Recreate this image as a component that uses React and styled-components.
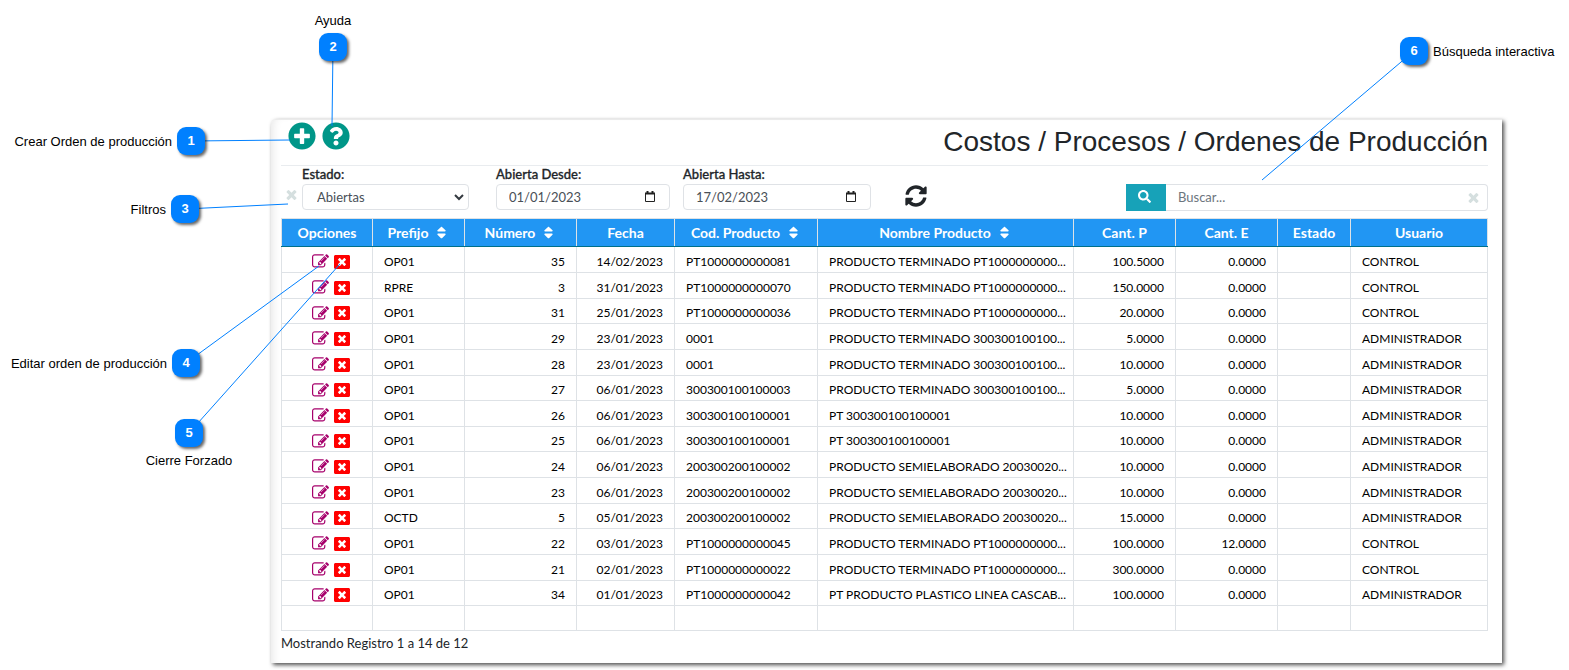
import { useState } from "react";
import styled, { createGlobalStyle } from "styled-components";
import {
  FaPlusCircle,
  FaQuestionCircle,
  FaSearch,
  FaSort,
  FaSyncAlt,
  FaWindowClose,
} from "react-icons/fa";

const columnas = [
  { id: "opciones", titulo: "Opciones", ancho: 91 },
  { id: "prefijo", titulo: "Prefijo", ancho: 92, orden: true },
  { id: "numero", titulo: "Número", ancho: 112, orden: true, derecha: true },
  { id: "fecha", titulo: "Fecha", ancho: 98, derecha: true },
  { id: "codigo", titulo: "Cod. Producto", ancho: 143, orden: true },
  { id: "nombre", titulo: "Nombre Producto", ancho: 256, orden: true },
  { id: "cantP", titulo: "Cant. P", ancho: 102, derecha: true },
  { id: "cantE", titulo: "Cant. E", ancho: 102, derecha: true },
  { id: "estado", titulo: "Estado", ancho: 73 },
  { id: "usuario", titulo: "Usuario", ancho: 137 },
];

const ordenes = [
  ["OP01", "35", "14/02/2023", "PT1000000000081", "PRODUCTO TERMINADO PT1000000000...", "100.5000", "0.0000", "", "CONTROL"],
  ["RPRE", "3", "31/01/2023", "PT1000000000070", "PRODUCTO TERMINADO PT1000000000...", "150.0000", "0.0000", "", "CONTROL"],
  ["OP01", "31", "25/01/2023", "PT1000000000036", "PRODUCTO TERMINADO PT1000000000...", "20.0000", "0.0000", "", "CONTROL"],
  ["OP01", "29", "23/01/2023", "0001", "PRODUCTO TERMINADO 300300100100...", "5.0000", "0.0000", "", "ADMINISTRADOR"],
  ["OP01", "28", "23/01/2023", "0001", "PRODUCTO TERMINADO 300300100100...", "10.0000", "0.0000", "", "ADMINISTRADOR"],
  ["OP01", "27", "06/01/2023", "300300100100003", "PRODUCTO TERMINADO 300300100100...", "5.0000", "0.0000", "", "ADMINISTRADOR"],
  ["OP01", "26", "06/01/2023", "300300100100001", "PT 300300100100001", "10.0000", "0.0000", "", "ADMINISTRADOR"],
  ["OP01", "25", "06/01/2023", "300300100100001", "PT 300300100100001", "10.0000", "0.0000", "", "ADMINISTRADOR"],
  ["OP01", "24", "06/01/2023", "200300200100002", "PRODUCTO SEMIELABORADO 20030020...", "10.0000", "0.0000", "", "ADMINISTRADOR"],
  ["OP01", "23", "06/01/2023", "200300200100002", "PRODUCTO SEMIELABORADO 20030020...", "10.0000", "0.0000", "", "ADMINISTRADOR"],
  ["OCTD", "5", "05/01/2023", "200300200100002", "PRODUCTO SEMIELABORADO 20030020...", "15.0000", "0.0000", "", "ADMINISTRADOR"],
  ["OP01", "22", "03/01/2023", "PT1000000000045", "PRODUCTO TERMINADO PT1000000000...", "100.0000", "12.0000", "", "CONTROL"],
  ["OP01", "21", "02/01/2023", "PT1000000000022", "PRODUCTO TERMINADO PT1000000000...", "300.0000", "0.0000", "", "CONTROL"],
  ["OP01", "34", "01/01/2023", "PT1000000000042", "PT PRODUCTO PLASTICO LINEA CASCAB...", "100.0000", "0.0000", "", "ADMINISTRADOR"],
];

// x, y: esquina del globo; x2, y2: punto que señala
const notas = [
  { n: 1, texto: "Crear Orden de producción", lado: "left", x: 177, y: 127, x2: 290, y2: 140 },
  { n: 2, texto: "Ayuda", lado: "top", x: 319, y: 33, x2: 332, y2: 126 },
  { n: 3, texto: "Filtros", lado: "left", x: 171, y: 195, x2: 288, y2: 204 },
  { n: 4, texto: "Editar orden de producción", lado: "left", x: 172, y: 349, x2: 319, y2: 266 },
  { n: 5, texto: "Cierre Forzado", lado: "bottom", x: 175, y: 419, x2: 340, y2: 264 },
  { n: 6, texto: "Búsqueda interactiva", lado: "right", x: 1400, y: 37, x2: 1262, y2: 180 },
];

function IconEditar() {
  return (
    <svg width="17" height="17" viewBox="0 0 1792 1792" fill="currentColor">
      <path d="M888 1184l116-116-152-152-116 116v56h96v96h56zm440-720q-16-16-33 1l-350 350q-17 17-1 33t33-1l350-350q17-17 1-33zm80 594v190q0 119-84.5 203.5t-203.5 84.5h-832q-119 0-203.5-84.5t-84.5-203.5v-832q0-119 84.5-203.5t203.5-84.5h832q63 0 117 25 15 7 18 23 3 17-9 29l-49 49q-14 14-32 8-23-6-45-6h-832q-66 0-113 47t-47 113v832q0 66 47 113t113 47h832q66 0 113-47t47-113v-126q0-13 9-22l64-64q15-15 35-7t20 29zm-96-738l288 288-672 672h-288v-288zm444 132l-92 92-288-288 92-92q28-28 68-28t68 28l152 152q28 28 28 68t-28 68z" />
    </svg>
  );
}

function IconLimpiar() {
  return (
    <svg width="15" height="15" viewBox="0 0 1792 1792" fill="currentColor">
      <path d="M1490 1322q0 40-28 68l-136 136q-28 28-68 28t-68-28l-294-294-294 294q-28 28-68 28t-68-28l-136-136q-28-28-28-68t28-68l294-294-294-294q-28-28-28-68t28-68l136-136q28-28 68-28t68 28l294 294 294-294q28-28 68-28t68 28l136 136q28 28 28 68t-28 68l-294 294 294 294q28 28 28 68z" />
    </svg>
  );
}

function IconCalendario() {
  return (
    <svg width="10" height="11" viewBox="0 0 10 11" fill="none" stroke="#222">
      <path d="M.5 2v8.500h9V2" />
      <path d="M0 2.500h10M2.500 0v2M7.500 0v2" strokeWidth="2" />
    </svg>
  );
}

function CampoFecha({ id, label, inicial, ancho }) {
  const [valor, setValor] = useState(inicial);
  return (
    <Campo $ancho={ancho}>
      <label htmlFor={id}>{label}</label>
      <CajaFecha>
        <input id={id} value={valor} onChange={(e) => setValor(e.target.value)} />
        <BtnIcono aria-label="Abrir calendario">
          <IconCalendario />
        </BtnIcono>
      </CajaFecha>
    </Campo>
  );
}

function Notas() {
  return (
    <CapaNotas>
      <svg width="100%" height="100%">
        {notas.map((nota) => (
          <line key={nota.n} x1={nota.x + 14} y1={nota.y + 14} x2={nota.x2} y2={nota.y2} stroke="#0080ff" />
        ))}
      </svg>
      {notas.map((nota) => (
        <Nota key={nota.n} style={{ left: nota.x, top: nota.y }}>
          <Globo>{nota.n}</Globo>
          <TextoNota $lado={nota.lado}>{nota.texto}</TextoNota>
        </Nota>
      ))}
    </CapaNotas>
  );
}

export default function App() {
  const [buscar, setBuscar] = useState("");
  return (
    <Container>
      <GlobalStyle />
      <Panel>
        <Header>
          <Acciones>
            <BtnIcono $color="#009688" aria-label="Crear orden de producción">
              <FaPlusCircle size={28} />
            </BtnIcono>
            <BtnIcono $color="#009688" aria-label="Ayuda">
              <FaQuestionCircle size={28} />
            </BtnIcono>
          </Acciones>
          <h1>Costos / Procesos / Ordenes de Producción</h1>
        </Header>
        <Filtros>
          <BtnLimpiar $color="#d5dfdf" aria-label="Limpiar filtros">
            <IconLimpiar />
          </BtnLimpiar>
          <Campo $ancho={167}>
            <label htmlFor="estado">Estado:</label>
            <CajaSelect>
              <select id="estado" defaultValue="Abiertas">
                <option>Abiertas</option>
                <option>Cerradas</option>
              </select>
              <svg width="10" height="7" viewBox="0 0 10 7" fill="none" stroke="#343a40" strokeWidth="2">
                <path d="M1 1l4 4 4-4" />
              </svg>
            </CajaSelect>
          </Campo>
          <CampoFecha id="desde" label="Abierta Desde:" inicial="01/01/2023" ancho={174} />
          <CampoFecha id="hasta" label="Abierta Hasta:" inicial="17/02/2023" ancho={188} />
          <BtnRecargar $color="#212529" aria-label="Recargar">
            <FaSyncAlt size={22} />
          </BtnRecargar>
          <Buscador>
            <BtnBuscar aria-label="Buscar">
              <FaSearch size={13} />
            </BtnBuscar>
            <input
              aria-label="Búsqueda"
              placeholder="Buscar..."
              value={buscar}
              onChange={(e) => setBuscar(e.target.value)}
            />
            <BtnIcono $color="#d5dfdf" aria-label="Limpiar búsqueda" onClick={() => setBuscar("")}>
              <IconLimpiar />
            </BtnIcono>
          </Buscador>
        </Filtros>
        <Tabla>
          <colgroup>
            {columnas.map((col) => (
              <Columna key={col.id} $ancho={col.ancho} />
            ))}
          </colgroup>
          <thead>
            <tr>
              {columnas.map((col) => (
                <th key={col.id}>
                  <Titulo>
                    {col.titulo}
                    {col.orden && <FaSort size={15} />}
                  </Titulo>
                </th>
              ))}
            </tr>
          </thead>
          <tbody>
            {ordenes.map((orden) => (
              <tr key={orden[1]}>
                <td>
                  <Opciones>
                    <BtnIcono $color="#a6006b" aria-label="Editar orden">
                      <IconEditar />
                    </BtnIcono>
                    <BtnIcono $color="#ff0000" aria-label="Cierre forzado">
                      <FaWindowClose size={16} />
                    </BtnIcono>
                  </Opciones>
                </td>
                {orden.map((valor, index) => (
                  <Celda key={index} $derecha={columnas[index + 1].derecha}>
                    {valor}
                  </Celda>
                ))}
              </tr>
            ))}
            <tr>
              {columnas.map((col) => (
                <td key={col.id} />
              ))}
            </tr>
          </tbody>
        </Tabla>
        <Pie>Mostrando Registro 1 a 14 de 12</Pie>
      </Panel>
      <Notas />
    </Container>
  );
}

const GlobalStyle = createGlobalStyle`
  * {
    box-sizing: border-box;
  }
  body {
    margin: 0;
    background: #fff;
    color: #212529;
    font-family: Lato, sans-serif;
    font-size: 13px;
  }
  input, select, button {
    font-family: inherit;
    font-size: inherit;
  }
`;
const Container = styled.div`
  position: relative;
  padding: 119px 67px 9px 271px;
`;
const Panel = styled.main`
  padding: 0 14px 8px 10px;
  border-top: 1px solid #ebebeb;
  border-radius: 5px 0 0 0;
  box-shadow: 2px 2px 4px rgba(0, 0, 0, 0.7), inset 8px 0 8px -6px #e8e8e8;
`;
const Header = styled.header`
  display: flex;
  align-items: center;
  justify-content: space-between;
  height: 46px;
  padding-bottom: 2px;
  border-bottom: 1px solid #e9ecef;
  h1 {
    margin: 0;
    font-family: "Liberation Sans", Arial, sans-serif;
    font-size: 28px;
    font-weight: 400;
    line-height: 42px;
  }
`;
const Acciones = styled.div`
  display: flex;
  align-self: flex-start;
  gap: 6px;
  padding: 2px 7px;
`;
const BtnIcono = styled.button`
  display: flex;
  padding: 0;
  border: 0;
  background: none;
  color: ${(props) => props.$color || "#222"};
  cursor: pointer;
`;
const BtnLimpiar = styled(BtnIcono)`
  margin-top: 4px;
`;
const Filtros = styled.section`
  display: flex;
  align-items: center;
  height: 52px;
  padding-left: 3px;
`;
const Campo = styled.div`
  align-self: flex-start;
  width: ${(props) => props.$ancho}px;
  margin-left: 3px;
  & + & {
    margin-left: 27px;
  }
  & + & + & {
    margin-left: 13px;
  }
  label {
    display: block;
    margin-bottom: 2px;
    font-weight: 500;
    line-height: 16px;
    -webkit-text-stroke: 0.300px;
  }
`;
const CajaFecha = styled.div`
  display: flex;
  align-items: center;
  height: 26px;
  padding: 0 14px 1px 12px;
  border: 1px solid #dfe2e6;
  border-radius: 4px;
  input {
    flex: 1;
    min-width: 0;
    padding: 0;
    border: 0;
    outline: 0;
    color: #495057;
  }
`;
const CajaSelect = styled(CajaFecha)`
  padding: 0 4px 0 14px;
  select {
    flex: 1;
    padding: 0;
    border: 0;
    background: none;
    color: #495057;
    appearance: none;
  }
`;
const BtnRecargar = styled(BtnIcono)`
  margin: 8px 0 0 34px;
`;
const Buscador = styled.div`
  display: flex;
  align-items: center;
  width: 362px;
  height: 27px;
  margin: 10px 0 0 auto;
  padding-right: 6px;
  border: 1px solid #dfe2e6;
  border-left: 0;
  border-radius: 0 4px 4px 0;
  input {
    flex: 1;
    min-width: 0;
    padding: 0 12px;
    border: 0;
    outline: 0;
    color: #495057;
  }
  input::placeholder {
    color: #6c757d;
  }
`;
const BtnBuscar = styled.button`
  display: flex;
  align-items: center;
  justify-content: center;
  width: 40px;
  height: 27px;
  padding: 0 4px 2px 0;
  border: 0;
  background: #17a2b8;
  color: #fff;
`;
const Tabla = styled.table`
  width: 100%;
  table-layout: fixed;
  border-collapse: collapse;
  th {
    height: 28px;
    padding: 0;
    border: 1px solid #dee2e6;
    border-bottom-color: #00708a;
    background: #2196f3;
    color: #fff;
    font-size: 14px;
    font-weight: 700;
  }
  td {
    height: 26px;
    padding: 4px 11px 0;
    border: 1px solid #dee2e6;
    color: #000;
    font-size: 12px;
    line-height: 20px;
  }
  tr:nth-child(3) td,
  tr:nth-child(6) td,
  tr:nth-child(3n + 8) td,
  tr:last-child td {
    height: 25px;
  }
`;
const Columna = styled.col`
  width: ${(props) => props.$ancho}px;
`;
const Titulo = styled.div`
  display: flex;
  align-items: center;
  justify-content: center;
  gap: 6px;
`;
const Opciones = styled.div`
  display: flex;
  align-items: center;
  justify-content: center;
  gap: 5px;
  padding-left: 8px;
`;
const Celda = styled.td`
  && {
    padding-right: ${(props) => (props.$derecha ? 11 : 4)}px;
  }
  white-space: nowrap;
  text-align: ${(props) => (props.$derecha ? "right" : "left")};
`;
const Pie = styled.footer`
  line-height: 24px;
`;
const CapaNotas = styled.div`
  position: absolute;
  inset: 0;
  pointer-events: none;
  font-family: "Liberation Sans", Arial, sans-serif;
  color: #000;
`;
const Nota = styled.div`
  position: absolute;
`;
const Globo = styled.div`
  width: 28px;
  height: 28px;
  border-radius: 9px;
  background: #0080ff;
  box-shadow: 2px 2px 3px rgba(0, 0, 0, 0.6);
  color: #fff;
  font-weight: 700;
  line-height: 28px;
  text-align: center;
`;
const posiciones = {
  left: "right: 33px; top: 7px;",
  right: "left: 33px; top: 7px;",
  top: "left: 14px; bottom: 32px; transform: translateX(-50%);",
  bottom: "left: 14px; top: 34px; transform: translateX(-50%);",
};
const TextoNota = styled.span`
  position: absolute;
  ${(props) => posiciones[props.$lado]}
  line-height: 16px;
  white-space: nowrap;
`;
